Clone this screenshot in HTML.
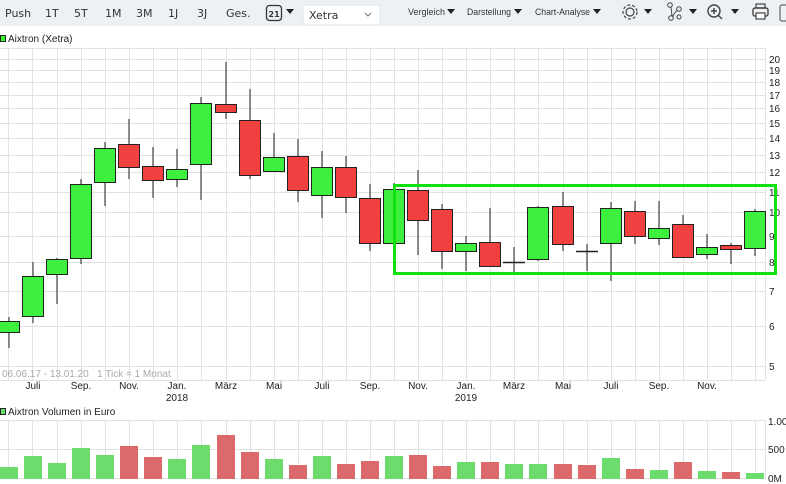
<!DOCTYPE html>
<html><head><meta charset="utf-8"><style>
html,body{margin:0;padding:0;background:#fff;width:786px;height:484px;overflow:hidden;font-family:"Liberation Sans",sans-serif}
svg{display:block}
.tb{font-family:"DejaVu Sans","Liberation Sans",sans-serif;font-size:11px;fill:#333}
.tb2{font-family:"Liberation Sans",sans-serif;font-size:9.5px;fill:#333}
.ax{font-size:10px;fill:#222}
</style></head><body>
<svg width="786" height="484" viewBox="0 0 786 484" xmlns="http://www.w3.org/2000/svg">
<rect x="0" y="0" width="786" height="26" fill="#eef1f4"/>
<g class="tb">
<text x="5" y="17">Push</text><text x="45" y="17">1T</text><text x="74" y="17">5T</text><text x="105" y="17">1M</text><text x="136" y="17">3M</text><text x="168" y="17">1J</text><text x="197" y="17">3J</text><text x="226" y="17">Ges.</text>
</g>
<rect x="266.5" y="5.5" width="15" height="15" rx="3" fill="none" stroke="#333" stroke-width="1.3"/>
<text x="268.5" y="17" style="font-family:'DejaVu Sans',sans-serif;font-size:8px;font-weight:bold;fill:#333">21</text>
<path d="M286 9h8l-4 5z" fill="#222"/>
<rect x="303" y="5" width="77" height="20" rx="3" fill="#fff" stroke="#e2e5e8"/>
<text x="309" y="19" class="tb">Xetra</text>
<path d="M365 13l3 3 3-3" fill="none" stroke="#777" stroke-width="1"/>
<g class="tb2">
<text x="408" y="15" textLength="37" lengthAdjust="spacingAndGlyphs">Vergleich</text><text x="467" y="15" textLength="44" lengthAdjust="spacingAndGlyphs">Darstellung</text><text x="535" y="15" textLength="55" lengthAdjust="spacingAndGlyphs">Chart-Analyse</text>
</g>
<path d="M447 9h8l-4 5zM514 9h8l-4 5zM593 9h8l-4 5zM644 9h8l-4 5zM689 9h8l-4 5zM731 9h8l-4 5z" fill="#222"/>
<circle cx="630" cy="12" r="4" fill="none" stroke="#444" stroke-width="1.2"/>
<circle cx="630" cy="12" r="7" fill="none" stroke="#444" stroke-width="1.2" stroke-dasharray="3 2"/>
<circle cx="670" cy="5" r="2.3" fill="none" stroke="#444"/><circle cx="679" cy="9" r="2.3" fill="none" stroke="#444"/><circle cx="671" cy="18" r="2.3" fill="none" stroke="#444"/><circle cx="679" cy="17" r="2" fill="none" stroke="#444"/>
<path d="M671 7l1 9M677 10l-5 7" stroke="#444" fill="none"/>
<circle cx="714" cy="11" r="6" fill="none" stroke="#444" stroke-width="1.4"/><path d="M711 11h6M714 8v6M718 15l4 4" stroke="#444" stroke-width="1.5"/>
<rect x="753" y="8" width="15" height="8" rx="2" fill="none" stroke="#444" stroke-width="1.4"/><rect x="756" y="4" width="9" height="4" fill="none" stroke="#444" stroke-width="1.2"/><rect x="756" y="13" width="9" height="6" fill="#fff" stroke="#444" stroke-width="1.2"/>
<rect x="780" y="5" width="8" height="16" rx="2" fill="none" stroke="#444"/>
<rect x="0.5" y="35.5" width="5" height="6" fill="#3f3" stroke="#222"/>
<text x="8" y="42" style="font-size:10px;fill:#222">Aixtron (Xetra)</text>
<g stroke="#e2e2e2" stroke-width="1">
<path d="M0 48.5H765M0 59.5H765M0 70.5H765M0 82.5H765M0 95.5H765M0 108.5H765M0 123.5H765M0 138.5H765M0 155.5H765M0 172.5H765M0 192.5H765M0 212.5H765M0 236.5H765M0 262.5H765M0 291.5H765M0 326.5H765M0 366.5H765M0 380.5H765M765.5 48V380"/>
<path d="M0 420.5H765M0 449.5H765M0 478.5H765M765.5 420V479"/>
<path d="M8.5 48V380M32.5 48V380M57.5 48V380M81.5 48V380M105.5 48V380M129.5 48V380M153.5 48V380M177.5 48V380M201.5 48V380M226.5 48V380M250.5 48V380M274.5 48V380M298.5 48V380M322.5 48V380M346.5 48V380M370.5 48V380M394.5 48V380M418.5 48V380M442.5 48V380M466.5 48V380M490.5 48V380M514.5 48V380M538.5 48V380M563.5 48V380M587.5 48V380M611.5 48V380M635.5 48V380M659.5 48V380M683.5 48V380M707.5 48V380M731.5 48V380M755.5 48V380"/>
<path d="M8.5 420V479M32.5 420V479M57.5 420V479M81.5 420V479M105.5 420V479M129.5 420V479M153.5 420V479M177.5 420V479M201.5 420V479M226.5 420V479M250.5 420V479M274.5 420V479M298.5 420V479M322.5 420V479M346.5 420V479M370.5 420V479M394.5 420V479M418.5 420V479M442.5 420V479M466.5 420V479M490.5 420V479M514.5 420V479M538.5 420V479M563.5 420V479M587.5 420V479M611.5 420V479M635.5 420V479M659.5 420V479M683.5 420V479M707.5 420V479M731.5 420V479M755.5 420V479"/>
</g>
<g class="ax">
<text x="769" y="63">20</text><text x="769" y="74">19</text><text x="769" y="86">18</text><text x="769" y="99">17</text><text x="769" y="112">16</text><text x="769" y="127">15</text><text x="769" y="142">14</text><text x="769" y="159">13</text><text x="769" y="176">12</text><text x="769" y="196">11</text><text x="769" y="216">10</text><text x="769" y="240">9</text><text x="769" y="266">8</text><text x="769" y="295">7</text><text x="769" y="330">6</text><text x="769" y="370">5</text>
<text x="768" y="425">1.00</text><text x="768" y="453">500</text><text x="768" y="482">0M</text>
</g>
<g class="ax" text-anchor="middle">
<text x="33" y="389">Juli</text><text x="81" y="389">Sep.</text><text x="129" y="389">Nov.</text><text x="177" y="389">Jan.</text><text x="177" y="401">2018</text><text x="226" y="389">März</text><text x="274" y="389">Mai</text><text x="322" y="389">Juli</text><text x="370" y="389">Sep.</text><text x="418" y="389">Nov.</text><text x="466" y="389">Jan.</text><text x="466" y="401">2019</text><text x="514" y="389">März</text><text x="563" y="389">Mai</text><text x="611" y="389">Juli</text><text x="659" y="389">Sep.</text><text x="707" y="389">Nov.</text>
</g>
<text x="2" y="377" xml:space="preserve" style="font-size:10px;fill:#aaa">06.06.17 - 13.01.20   1 Tick = 1 Monat</text>
<rect x="0.5" y="408.5" width="5" height="6" fill="#6d6" stroke="#222"/>
<text x="8" y="415" style="font-size:10px;fill:#222">Aixtron Volumen in Euro</text>
<g stroke="#222" stroke-width="1">
<path d="M9 317V348M33 262V323M57 258V304M81 179V264M105 142V206M129 119V179M153 147V198M177 149V187M201 97V200M226 62V119M250 89V179M274 133V172M298 139V202M322 151V218M346 156V213M370 184V251M394 183V243M418 170V255M442 204V269M466 236V271M490 208V267M514 247V274M538 206V261M563 192V251M587 244V271M611 202V281M635 201V244M659 201V245M683 215V257M707 234V259M731 243V264M755 209V256"/>
<g fill="#3ef03e">
<rect x="-1.5" y="321.5" width="21" height="11"/><rect x="22.5" y="276.5" width="21" height="40"/><rect x="46.5" y="259.5" width="21" height="15"/><rect x="70.5" y="184.5" width="21" height="74"/><rect x="94.5" y="148.5" width="21" height="34"/><rect x="166.5" y="169.5" width="21" height="10"/><rect x="190.5" y="103.5" width="21" height="61"/><rect x="263.5" y="157.5" width="21" height="14"/><rect x="311.5" y="167.5" width="21" height="28"/><rect x="383.5" y="189.5" width="21" height="54"/><rect x="455.5" y="243.5" width="21" height="8"/><rect x="527.5" y="207.5" width="21" height="52"/><rect x="600.5" y="208.5" width="21" height="35"/><rect x="648.5" y="228.5" width="21" height="10"/><rect x="696.5" y="247.5" width="21" height="7"/><rect x="744.5" y="211.5" width="21" height="37"/>
</g>
<g fill="#f04040">
<rect x="118.5" y="144.5" width="21" height="23"/><rect x="142.5" y="166.5" width="21" height="14"/><rect x="215.5" y="104.5" width="21" height="8"/><rect x="239.5" y="120.5" width="21" height="55"/><rect x="287.5" y="156.5" width="21" height="34"/><rect x="335.5" y="167.5" width="21" height="30"/><rect x="359.5" y="198.5" width="21" height="45"/><rect x="407.5" y="190.5" width="21" height="30"/><rect x="431.5" y="209.5" width="21" height="42"/><rect x="479.5" y="242.5" width="21" height="24"/><rect x="552.5" y="206.5" width="21" height="38"/><rect x="624.5" y="211.5" width="21" height="25"/><rect x="672.5" y="224.5" width="21" height="33"/><rect x="720.5" y="245.5" width="21" height="4"/>
</g>
<path d="M503 262.5H525M576 251.5H598" stroke-width="1.5"/>
</g>
<rect x="394.5" y="185.5" width="381" height="88" fill="none" stroke="#11e011" stroke-width="3"/>
<g fill="#6cdc6c">
<rect x="0" y="467" width="18" height="12"/><rect x="24" y="456" width="18" height="23"/><rect x="48" y="463" width="18" height="16"/><rect x="72" y="448" width="18" height="31"/><rect x="96" y="455" width="18" height="24"/><rect x="168" y="459" width="18" height="20"/><rect x="192" y="445" width="18" height="34"/><rect x="265" y="459" width="18" height="20"/><rect x="313" y="456" width="18" height="23"/><rect x="385" y="456" width="18" height="23"/><rect x="457" y="462" width="18" height="17"/><rect x="505" y="464" width="18" height="15"/><rect x="529" y="464" width="18" height="15"/><rect x="602" y="458" width="18" height="21"/><rect x="650" y="470" width="18" height="9"/><rect x="698" y="471" width="18" height="8"/><rect x="746" y="473" width="18" height="6"/>
</g>
<g fill="#dc6a6a">
<rect x="120" y="446" width="18" height="33"/><rect x="144" y="457" width="18" height="22"/><rect x="217" y="435" width="18" height="44"/><rect x="241" y="452" width="18" height="27"/><rect x="289" y="465" width="18" height="14"/><rect x="337" y="464" width="18" height="15"/><rect x="361" y="461" width="18" height="18"/><rect x="409" y="455" width="18" height="24"/><rect x="433" y="466" width="18" height="13"/><rect x="481" y="462" width="18" height="17"/><rect x="554" y="464" width="18" height="15"/><rect x="578" y="465" width="18" height="14"/><rect x="626" y="469" width="18" height="10"/><rect x="674" y="462" width="18" height="17"/><rect x="722" y="472" width="18" height="7"/>
</g>
</svg>
</body></html>
